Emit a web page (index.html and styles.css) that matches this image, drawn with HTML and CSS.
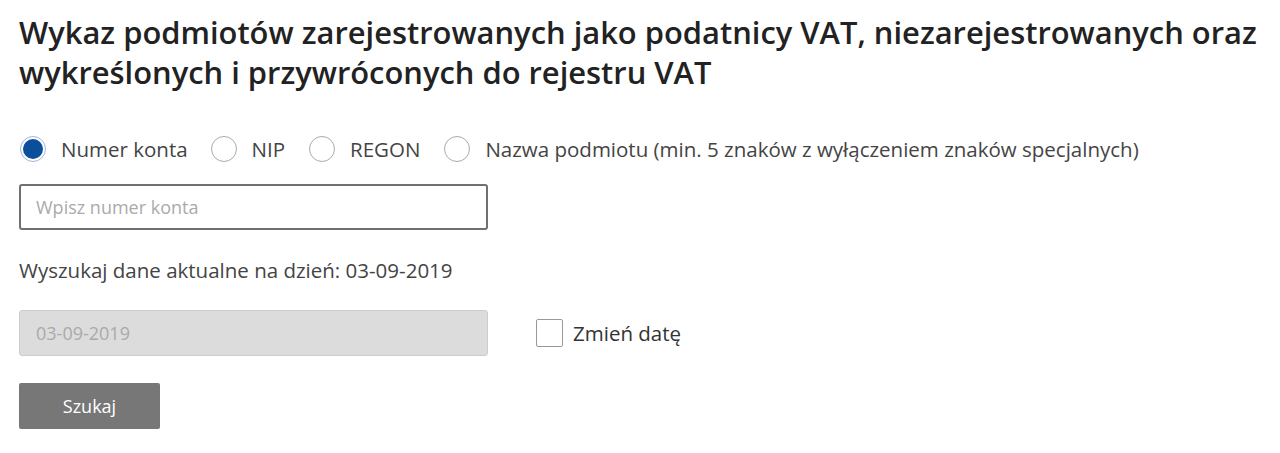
FILE: index.html
```html
<!DOCTYPE html>
<html lang="pl">
<head>
    <meta charset="UTF-8">
    <meta name="viewport" content="width=device-width, initial-scale=1.0">
    <title>Wykaz podatników VAT</title>
    <link rel="stylesheet" href="styles.css">
</head>
<body>
    <div class="container">
        <h1>Wykaz podmiotów zarejestrowanych jako podatnicy VAT, niezarejestrowanych oraz wykreślonych i przywróconych do rejestru VAT</h1>

        <div class="search-type">
            <label class="radio"><span class="radio-mark checked"></span>Numer konta</label>
            <label class="radio"><span class="radio-mark"></span>NIP</label>
            <label class="radio"><span class="radio-mark"></span>REGON</label>
            <label class="radio"><span class="radio-mark"></span>Nazwa podmiotu (min. 5 znaków z wyłączeniem znaków specjalnych)</label>
        </div>

        <input type="text" class="field" placeholder="Wpisz numer konta">

        <p class="date-info">Wyszukaj dane aktualne na dzień: 03-09-2019</p>

        <div class="date-row">
            <input type="text" class="field disabled" value="03-09-2019" disabled>
            <label class="check"><span class="check-mark"></span>Zmień datę</label>
        </div>

        <button class="btn">Szukaj</button>
    </div>
</body>
</html>
```

FILE: styles.css
```css
body {
    margin: 0;
    padding: 0;
    font-family: "Open Sans", Arial, sans-serif;
    background: #fff;
    color: #333;
}
.container {
    padding: 12px 19px;
}
h1 {
    font-size: 30.9px;
    font-weight: 600;
    line-height: 40px;
    color: #222;
    margin: 0 0 44px 0;
}
.search-type {
    display: flex;
    align-items: center;
    height: 26px;
    margin-bottom: 22px;
}
.radio {
    display: flex;
    align-items: center;
    font-size: 20.5px;
    line-height: 26px;
    color: #444;
    margin-right: 23px;
    margin-left: 1px;
}
.radio:first-child {
    margin-right: 22px;
}
.radio-mark {
    width: 24px;
    height: 24px;
    border: 1px solid #aaa;
    border-radius: 50%;
    margin-right: 15px;
    box-sizing: content-box;
    position: relative;
}
.radio-mark.checked {
    border-color: #9fb7d6;
}
.radio-mark.checked::after {
    content: "";
    position: absolute;
    left: 2px;
    top: 2px;
    width: 20px;
    height: 20px;
    border-radius: 50%;
    background: #0b4f9c;
}
.field {
    display: block;
    box-sizing: border-box;
    width: 469px;
    height: 46px;
    border: 2px solid #707070;
    border-radius: 3px;
    padding: 0 15px;
    font-family: "Open Sans", Arial, sans-serif;
    font-size: 18px;
    color: #aaa;
    background: #fff;
}
.field::placeholder {
    color: #aaa;
}
.field.disabled {
    background: #dcdcdc;
    border: 1px solid #ccc;
    color: #aaa;
    padding-left: 16px;
}
.date-info {
    font-size: 20.5px;
    color: #444;
    margin: 28px 0 28px 0;
    line-height: 24px;
}
.date-row {
    display: flex;
    align-items: center;
    margin-bottom: 27px;
}
.check {
    display: flex;
    align-items: center;
    font-size: 20.5px;
    color: #333;
    margin-left: 48px;
}
.check-mark {
    width: 25px;
    height: 26px;
    border: 1px solid #999;
    border-radius: 2px;
    margin-right: 10px;
}
.btn {
    width: 141px;
    height: 46px;
    border: none;
    border-radius: 2px;
    background: #777;
    color: #fff;
    font-family: "Open Sans", Arial, sans-serif;
    font-size: 18px;
}
```
